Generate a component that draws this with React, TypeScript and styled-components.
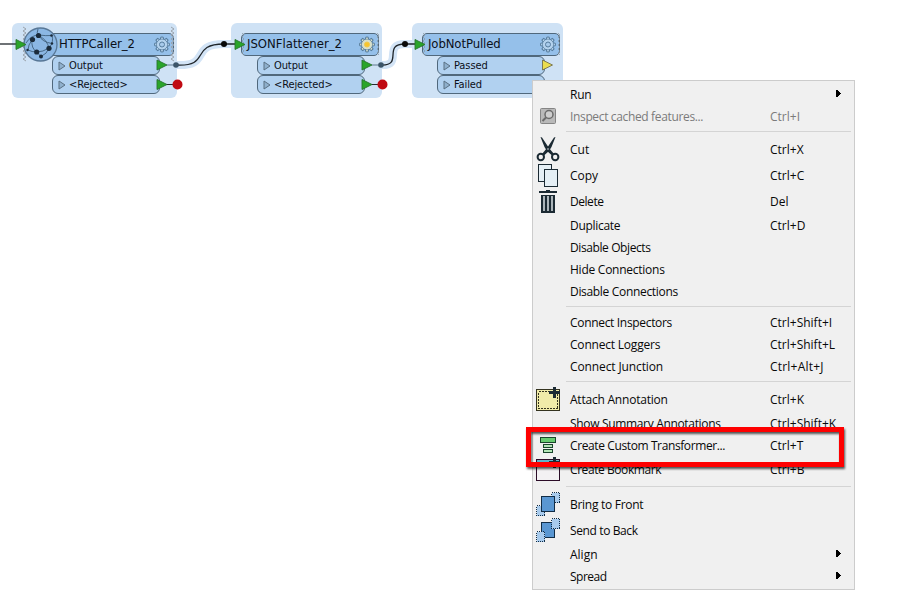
import React from 'react';
import styled, { createGlobalStyle } from 'styled-components';

const Global = createGlobalStyle`
  body { margin: 0; background: #fff; overflow: hidden; }
  * { box-sizing: border-box; }
`;

const Canvas = styled.main`
  position: relative;
  width: 900px;
  height: 613px;
  overflow: hidden;
  background: #fff;
`;

const Overlay = styled.svg`
  position: absolute;
  left: 0;
  top: 0;
  pointer-events: none;
`;

const NodeBox = styled.section<{ $x: number; $w: number; $pad: number }>`
  position: absolute;
  left: ${p => p.$x}px;
  top: 23px;
  width: ${p => p.$w}px;
  height: 75px;
  padding: 10px 3px 0 ${p => p.$pad}px;
  border-radius: 6px;
  background: #cfe2f5;
`;

const NodeHeader = styled.header<{ $indent: number }>`
  display: flex;
  align-items: center;
  height: 23px;
  padding: 0 0 2px ${p => p.$indent}px;
  border: 1px solid #50687c;
  border-radius: 5px;
  background: #95c0ea;
`;

const Port = styled.div<{ $ml: number }>`
  display: flex;
  align-items: center;
  width: 108px;
  height: 19px;
  margin-left: ${p => p.$ml}px;
  padding-left: 5px;
  gap: 3px;
  border: 1px solid #50687c;
  border-radius: 6px;
  background: #b1d1f0;
`;

const NodeText = styled.span<{ $size: number; $ls: number }>`
  font: ${p => p.$size}px/16px "DejaVu Sans Condensed", "DejaVu Sans", sans-serif;
  font-stretch: condensed;
  letter-spacing: ${p => p.$ls}px;
  white-space: pre;
  color: #0b0f18;
`;

const Menu = styled.nav`
  position: absolute;
  left: 532px;
  top: 80px;
  width: 323px;
  height: 510px;
  padding: 2px 3px 2px 2px;
  border: 1px solid #ccc;
  background: #f0f0f0;
`;

const Item = styled.div<{ $tall?: boolean; $off?: boolean }>`
  display: grid;
  grid-template-columns: 35px 200px 66px 1fr;
  grid-template-rows: 100%;
  align-items: center;
  height: ${p => (p.$tall ? 26 : 22)}px;
  color: ${p => (p.$off ? '#7b7b7b' : '#080808')};
`;

const IconCell = styled.span`
  display: flex;
  width: 26px;
  height: 26px;
`;

const MenuText = styled.span<{ $ls: number }>`
  margin-top: 2px;
  font: 12px/16px "Open Sans", "Noto Sans", sans-serif;
  letter-spacing: ${p => p.$ls}px;
  white-space: pre;
`;

const Separator = styled.div`
  height: 9px;
  margin-left: 31px;
  padding-top: 4px;
  &::before {
    content: '';
    display: block;
    height: 1px;
    background: #d4d4d4;
  }
`;

const Highlight = styled.div`
  position: absolute;
  left: 526px;
  top: 427px;
  width: 318px;
  height: 40px;
  border: 5px solid #fe0000;
  filter: drop-shadow(1px 2px 1px rgba(0, 0, 0, 0.65));
`;

type IconName = 'inspect' | 'cut' | 'copy' | 'delete' | 'note' | 'custom' | 'bookmark' | 'front' | 'back';

const plus = <path d="M18 1H21V5H25V8H21V12H18V8H14V5H18Z" fill="#1b2a33" />;

const glyphs: Record<IconName, React.ReactNode> = {
  inspect: (
    <>
      <rect x="5.500" y="5.500" width="15" height="15" rx="1" fill="#b9b9b9" stroke="#858585" />
      <circle cx="14" cy="11.500" r="4" fill="#cecece" stroke="#6b6b6b" strokeWidth="1.500" />
      <path d="M11 14.500L7.500 18" stroke="#6b6b6b" strokeWidth="2" />
    </>
  ),
  cut: (
    <>
      <path d="M5.500 1L7 1.500L14 12L19 18L17 19.500L12 15L9.500 11Z" fill="#1b2a33" />
      <path d="M20.500 1L19 1.500L12 12L7 18L9 19.500L14 15L16.500 11Z" fill="#1b2a33" />
      <circle cx="5.800" cy="21" r="3.200" fill="#f0f0f0" stroke="#1b2a33" strokeWidth="2" />
      <circle cx="20.200" cy="21" r="3.200" fill="#f0f0f0" stroke="#1b2a33" strokeWidth="2" />
      <circle cx="13" cy="13" r="0.800" fill="#dfe5e8" />
    </>
  ),
  copy: (
    <g fill="#e5eff5" stroke="#1b2a33" shapeRendering="crispEdges">
      <rect x="3.500" y="2.500" width="13" height="17" />
      <rect x="9.500" y="7.500" width="13" height="17" />
    </g>
  ),
  delete: (
    <g shapeRendering="crispEdges">
      <path d="M4 3H11V2H15V3H22V5H4ZM6 7H20V25H6Z" fill="#1b2a33" />
      <path d="M9 8V23M13 8V23M17 8V23" stroke="#aab4b9" strokeWidth="2" />
    </g>
  ),
  note: (
    <g shapeRendering="crispEdges">
      <rect x="1.500" y="3.500" width="23" height="21" fill="#f0eba9" stroke="#34331f" />
      <rect x="3.500" y="5.500" width="19" height="17" fill="none" stroke="#34331f" strokeDasharray="2 1" />
      {plus}
    </g>
  ),
  custom: (
    <g stroke="#19452c" shapeRendering="crispEdges">
      <rect x="5.500" y="5.500" width="15" height="5" fill="#66cc70" />
      <rect x="8.500" y="12.500" width="9" height="3" fill="#b2e5b6" />
      <rect x="8.500" y="17.500" width="9" height="3" fill="#b2e5b6" />
    </g>
  ),
  bookmark: (
    <g shapeRendering="crispEdges">
      <rect x="1.500" y="3.500" width="23" height="21" fill="#f3f1f3" stroke="#2b0c27" />
      <rect x="2" y="4" width="22" height="4" fill="#5bb5cc" />
      {plus}
    </g>
  ),
  front: (
    <g stroke="#122d46" shapeRendering="crispEdges">
      <path d="M16.500 1.500H24.500V11.500H16.500ZM1.500 14.500H9.500V24.500H1.500Z" fill="#a8cbed" strokeDasharray="1 1" />
      <rect x="6.500" y="5.500" width="13" height="15" fill="#5a97d2" />
    </g>
  ),
  back: (
    <g stroke="#122d46" shapeRendering="crispEdges">
      <rect x="6.500" y="5.500" width="13" height="15" fill="#5a97d2" />
      <path d="M16.500 1.500H24.500V11.500H16.500ZM1.500 14.500H9.500V24.500H1.500Z" fill="#a8cbed" strokeDasharray="1 1" />
    </g>
  ),
};

interface Entry {
  label: string;
  ls?: number;
  keys?: string;
  kls?: number;
  icon?: IconName;
  sub?: boolean;
  off?: boolean;
}

const groups: Entry[][] = [
  [
    { label: 'Run', ls: -0.2, sub: true },
    { label: 'Inspect cached features...', ls: -0.35, keys: 'Ctrl+I', icon: 'inspect', off: true },
  ],
  [
    { label: 'Cut', keys: 'Ctrl+X', icon: 'cut' },
    { label: 'Copy', keys: 'Ctrl+C', icon: 'copy' },
    { label: 'Delete', ls: -0.45, keys: 'Del', icon: 'delete' },
    { label: 'Duplicate', ls: -0.3, keys: 'Ctrl+D' },
    { label: 'Disable Objects', ls: -0.4 },
    { label: 'Hide Connections', ls: -0.25 },
    { label: 'Disable Connections', ls: -0.32 },
  ],
  [
    { label: 'Connect Inspectors', ls: -0.32, keys: 'Ctrl+Shift+I' },
    { label: 'Connect Loggers', ls: -0.2, keys: 'Ctrl+Shift+L' },
    { label: 'Connect Junction', ls: -0.12, keys: 'Ctrl+Alt+J', kls: 0.2 },
  ],
  [
    { label: 'Attach Annotation', ls: -0.22, keys: 'Ctrl+K', icon: 'note' },
    { label: 'Show Summary Annotations', ls: -0.33, keys: 'Ctrl+Shift+K' },
    { label: 'Create Custom Transformer...', ls: -0.39, keys: 'Ctrl+T', icon: 'custom' },
    { label: 'Create Bookmark', ls: -0.43, keys: 'Ctrl+B', icon: 'bookmark' },
  ],
  [
    { label: 'Bring to Front', ls: -0.28, icon: 'front' },
    { label: 'Send to Back', ls: -0.38, icon: 'back' },
    { label: 'Align', sub: true },
    { label: 'Spread', ls: -0.5, sub: true },
  ],
];

const Chevron = () => (
  <svg width="5" height="8" viewBox="0 0 5 8" shapeRendering="crispEdges">
    <path d="M0 0H1L4.500 3.500L1 7H0Z" />
  </svg>
);

const MenuRow = ({ e }: { e: Entry }) => (
  <Item $tall={!!e.icon && e.icon !== 'inspect' && e.icon !== 'custom'} $off={e.off}>
    <IconCell>
      {e.icon && <svg width="26" height="26" viewBox="0 0 26 26" fill="none">{glyphs[e.icon]}</svg>}
    </IconCell>
    <MenuText $ls={e.ls ?? 0}>{e.label}</MenuText>
    <MenuText $ls={e.kls ?? 0}>{e.keys ?? ''}</MenuText>
    {e.sub && <Chevron />}
  </Item>
);

const PortMark = () => (
  <svg width="8" height="10" viewBox="0 0 8 10">
    <path d="M1 1L7 5L1 9Z" fill="#8fb0cd" stroke="#5a7083" />
  </svg>
);

interface NodeData {
  x: number; w: number; pad: number; indent: number; ml: number;
  title: string; ls: number; ports: string[];
}

const nodes: NodeData[] = [
  { x: 12, w: 165, pad: 28, indent: 18, ml: 12, title: 'HTTPCaller_2', ls: -0.1, ports: ['Output', '<Rejected>'] },
  { x: 231, w: 151, pad: 10, indent: 5, ml: 16, title: 'JSONFlattener_2', ls: 0, ports: ['Output', '<Rejected>'] },
  { x: 412, w: 151, pad: 10, indent: 5, ml: 15, title: 'JobNotPulled', ls: -0.1, ports: ['Passed', 'Failed'] },
];

const TransformerNode = ({ n }: { n: NodeData }) => (
  <NodeBox $x={n.x} $w={n.w} $pad={n.pad}>
    <NodeHeader $indent={n.indent}>
      <NodeText $size={13} $ls={n.ls}>{n.title}</NodeText>
    </NodeHeader>
    {n.ports.map(p => (
      <Port key={p} $ml={n.ml}>
        <PortMark />
        <NodeText $size={11} $ls={-0.1}>{p}</NodeText>
      </Port>
    ))}
  </NodeBox>
);

const Gear = ({ x, lit }: { x: number; lit?: boolean }) => (
  <g transform={`translate(${x} 44.500)`} stroke="#567c9d" fill={lit ? '#d9e0c9' : '#b5d3ee'}>
    {[0, 45, 90, 135, 180, 225, 270, 315].map(a => (
      <path key={a} d="M-1.700 -5L-1.200 -7.400H1.200L1.700 -5" transform={`rotate(${a})`} />
    ))}
    <circle r="5.300" />
    <circle r="5" stroke="none" />
    <circle r="2.500" fill={lit ? '#f7c52c' : '#a7caeb'} stroke={lit ? '#f2c94c' : '#567c9d'} />
  </g>
);

const Arrow = ({ x, y, fill = '#2aa52a' }: { x: number; y: number; fill?: string }) => (
  <path d={`M${x} ${y - 5}L${x + 10} ${y}L${x} ${y + 5}Z`} fill={fill} stroke={fill === '#2aa52a' ? '#28752e' : '#74704b'} strokeWidth="0.900" />
);

/* Small zigzag running down the edge of a transformer header. */
const zigzag = (x: number, top: number, bottom: number, w: number) => {
  let d = `M${x} ${top}`;
  for (let y = top + 2, i = 0; y <= bottom; y += 2, i += 1) d += `L${i % 2 ? x : x + w} ${y}`;
  return d;
};

const curves = 'M176 65C212 67 189 44 224 44H235M381 65C404 66 382 44 405 44H415';

const App = () => (
  <Canvas>
    <Global />
    {nodes.map(n => <TransformerNode key={n.title} n={n} />)}
    <Overlay width="900" height="110" viewBox="0 0 900 110" fill="none">
      <path d={curves} stroke="#d3e4f6" strokeWidth="8" />
      <path d={curves} stroke="#20262b" strokeWidth="1.300" />
      <path d="M0 44H16" stroke="#20262b" strokeWidth="1.300" />
      <path d={zigzag(23, 27, 61, 3) + zigzag(171, 27, 61, 3)} stroke="#9ba3ab" strokeWidth="1" />
      <path d={zigzag(242, 33, 56, 2) + zigzag(377, 33, 56, 2) + zigzag(423, 33, 56, 2) + zigzag(558, 33, 56, 2)} stroke="#8795a1" strokeWidth="0.700" />
      <circle cx="40.500" cy="44.500" r="16.500" fill="#8bb7e4" stroke="#587796" strokeWidth="1.300" />
      <path d="M26 43Q31 35 39 35Q46 36 52 35.500M32 40Q28 45 28 50Q32 52 36.500 52Q43 52 49 48Q54 42 52 35.500M39 35.500Q47 40 49 48Q47 54 41 56.500M32 40Q31 48 36.500 52L41 56.500M39 35.500Q42 42 52 43.500M38 29Q36 33 39 35.500" stroke="#3f607d" strokeWidth="0.900" />
      <g fill="#1b2b3b">
        <circle cx="32.500" cy="39.500" r="2.600" /><circle cx="38.500" cy="35.500" r="2.600" />
        <circle cx="49" cy="48.300" r="2.600" /><circle cx="36.700" cy="52" r="2.600" />
        <circle cx="41" cy="56.500" r="2" /><circle cx="51.500" cy="35.500" r="1.300" />
        <circle cx="27.500" cy="50" r="1.200" /><circle cx="52" cy="43.500" r="1.200" />
      </g>
      <Arrow x={16} y={44.5} /><Arrow x={235} y={44.5} /><Arrow x={415} y={44.5} />
      <Gear x={162} /><Gear x={367} lit /><Gear x={548} />
      <path d="M166 84.500H177M371 84.500H382" stroke="#262b30" />
      <Arrow x={157} y={65} /><Arrow x={157} y={84.5} />
      <Arrow x={362} y={65} /><Arrow x={362} y={84.5} />
      <Arrow x={542.5} y={65} fill="#eadd4f" />
      <path d="M167 65H176M372 65H381" stroke="#60798e" />
      <circle cx="176" cy="65" r="2.800" fill="#3c5569" /><circle cx="381" cy="65" r="2.800" fill="#3c5569" />
      <circle cx="224" cy="44" r="3" fill="#080808" /><circle cx="405" cy="44" r="3" fill="#080808" />
      <circle cx="177.500" cy="84.500" r="5" fill="#c00a12" /><circle cx="382.500" cy="84.500" r="5" fill="#c00a12" />
    </Overlay>
    <Menu>
      {groups.map((g, i) => (
        <React.Fragment key={g[0].label}>
          {i > 0 && <Separator />}
          {g.map(e => <MenuRow key={e.label} e={e} />)}
        </React.Fragment>
      ))}
    </Menu>
    <Highlight />
  </Canvas>
);

export default App;
